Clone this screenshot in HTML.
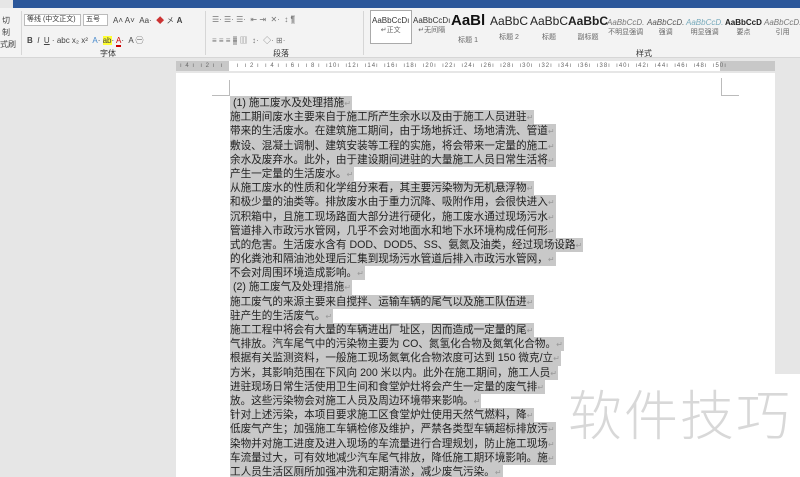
<!DOCTYPE html>
<html style="overflow:hidden;width:800px;height:477px"><head><meta charset="utf-8">
<style>
*{margin:0;padding:0;box-sizing:border-box}
body{width:800px;height:477px;overflow:hidden;background:#e6e6e6;font-family:"Liberation Sans","Noto Sans CJK SC",sans-serif;position:relative}
.abs{position:absolute}
.top{left:13px;top:0;width:787px;height:8px;background:#2b579a}
.rib{left:0;top:8px;width:800px;height:50px;background:#f3f3f3;border-bottom:1px solid #d6d6d6}
.t{position:absolute;font-size:8px;color:#444;white-space:nowrap}
.box{position:absolute;border:1px solid #bbb;background:#fff;height:12px;font-size:7px;color:#333;padding-left:2px;line-height:10px;white-space:nowrap;overflow:hidden}
.sep{position:absolute;width:1px;background:#d6d6d6;top:11px;height:44px}
.sty{position:absolute;top:8px;text-align:center;white-space:nowrap}
.ruler{left:176px;top:61px;width:599px;height:10px;background:#c8c8c8}
.page{left:176px;top:73px;width:599px;height:404px;background:#fff}
.doc{left:230px;top:96px;font-size:10.6px;color:#222;line-height:14.2px;height:381px;overflow:hidden}
.doc div{height:14.2px;white-space:nowrap}
.doc span{background:#c8c8c8;display:inline-block;height:14.2px;padding-right:1px}
.doc i{font-style:normal;color:#999;font-size:8px}
.wm{left:568px;top:382px;font-size:54px;color:#d8d8d8;font-family:"Noto Sans CJK SC",sans-serif;font-weight:300;letter-spacing:2px;line-height:60px}
</style></head><body>
<div class="abs top"></div>
<div class="abs rib">
  <div class="t" style="left:2px;top:7px">切</div>
  <div class="t" style="left:2px;top:19px">制</div>
  <div class="t" style="left:0;top:31px">式刷</div>
  <div class="sep" style="left:21px;top:3px"></div>
  <div class="box" style="left:24px;top:6px;width:57px">等线 (中文正文)</div>
  <div class="box" style="left:83px;top:6px;width:25px">五号</div>
  <div class="t" style="left:113px;top:7px">A˄ A˅ &nbsp;Aa· &nbsp;<span style="color:#c33">◆</span> 㐅 <b>A</b></div>
  <div class="t" style="left:27px;top:27px"><b>B</b> &nbsp;<i>I</i> &nbsp;<u>U</u> · abc x₂ x² &nbsp;<span style="color:#48c">A</span>· <span style="background:#ff3">ab</span>· <span style="color:#c00;border-bottom:2px solid #c00">A</span>· &nbsp;A ㊀</div>
  <div class="t" style="left:100px;top:40px;color:#333">字体</div>
  <div class="sep" style="left:205px;top:3px"></div>
  <div class="t" style="left:212px;top:7px;color:#777">☰· ☰· ☰· &nbsp;⇤ ⇥ &nbsp;✕· &nbsp;↕ <span style="background:#ccc">¶</span></div>
  <div class="t" style="left:212px;top:27px;color:#777">≡ ≡ ≡ <span style="background:#bbb">≡</span> ▥ &nbsp;↕· &nbsp;◇· ⊞·</div>
  <div class="t" style="left:273px;top:40px;color:#333">段落</div>
  <div class="sep" style="left:363px;top:3px"></div>
  <div class="abs" style="left:370px;top:2px;width:42px;height:34px;border:1px solid #aaa;background:#fff"></div>
  <div class="sty" style="left:372px;font-size:8px;color:#333">AaBbCcDı<br><span style="font-size:7px;color:#666">↵正文</span></div>
  <div class="sty" style="left:413px;font-size:8px;color:#333">AaBbCcDı<br><span style="font-size:7px;color:#666">↵无间隔</span></div>
  <div class="sty" style="left:451px;top:4px;font-size:15px;font-weight:bold;color:#111">AaBl<br><span style="font-size:7px;color:#666;font-weight:normal">标题 1</span></div>
  <div class="sty" style="left:490px;top:6px;font-size:12px;color:#222">AaBbC<br><span style="font-size:7px;color:#666">标题 2</span></div>
  <div class="sty" style="left:530px;top:6px;font-size:12px;color:#222">AaBbC<br><span style="font-size:7px;color:#666">标题</span></div>
  <div class="sty" style="left:568px;top:6px;font-size:12px;font-weight:bold;color:#222">AaBbC<br><span style="font-size:7px;color:#666;font-weight:normal">副标题</span></div>
  <div class="sty" style="left:607px;top:10px;font-size:8px;font-style:italic;color:#777">AaBbCcD.<br><span style="font-size:7px;color:#666;font-style:normal">不明显强调</span></div>
  <div class="sty" style="left:647px;top:10px;font-size:8px;font-style:italic;color:#555">AaBbCcD.<br><span style="font-size:7px;color:#666;font-style:normal">强调</span></div>
  <div class="sty" style="left:686px;top:10px;font-size:8px;font-style:italic;color:#7ab">AaBbCcD.<br><span style="font-size:7px;color:#666;font-style:normal">明显强调</span></div>
  <div class="sty" style="left:725px;top:10px;font-size:8px;font-weight:bold;color:#222">AaBbCcD<br><span style="font-size:7px;color:#666;font-weight:normal">要点</span></div>
  <div class="sty" style="left:764px;top:10px;font-size:8px;font-style:italic;color:#777">AaBbCcD.<br><span style="font-size:7px;color:#666;font-style:normal">引用</span></div>
  <div class="t" style="left:636px;top:40px;color:#333">样式</div>
</div>
<div class="abs ruler"></div>
<div class="abs" style="left:229px;top:61px;width:491px;height:10px;background:#fff"></div>
<div class="abs" style="left:180px;top:63px;font-size:6px;color:#666;white-space:nowrap;letter-spacing:1px">ı 4 ı &nbsp;ı 2 ı &nbsp;ı &nbsp;&nbsp;&nbsp;&nbsp;ı &nbsp;ı 2 ı &nbsp;ı 4 ı &nbsp;ı 6 ı &nbsp;ı 8 ı &nbsp;ı10ı &nbsp;ı12ı &nbsp;ı14ı &nbsp;ı16ı &nbsp;ı18ı &nbsp;ı20ı &nbsp;ı22ı &nbsp;ı24ı &nbsp;ı26ı &nbsp;ı28ı &nbsp;ı30ı &nbsp;ı32ı &nbsp;ı34ı &nbsp;ı36ı &nbsp;ı38ı &nbsp;ı40ı &nbsp;ı42ı &nbsp;ı44ı &nbsp;ı46ı &nbsp;ı48ı &nbsp;ı50ı</div>
<div class="abs page"></div>
<div class="abs" style="left:229px;top:80px;width:1px;height:16px;background:#bbb"></div>
<div class="abs" style="left:212px;top:95px;width:17px;height:1px;background:#bbb"></div>
<div class="abs" style="left:721px;top:78px;width:1px;height:17px;background:#bbb"></div>
<div class="abs" style="left:721px;top:95px;width:18px;height:1px;background:#bbb"></div>
<div class="abs" style="left:774px;top:374px;width:26px;height:103px;background:#fff"></div>
<div class="abs doc">
<div><span>&nbsp;(1) 施工废水及处理措施<i>↵</i></span></div>
<div><span>施工期间废水主要来自于施工所产生余水以及由于施工人员进驻<i>↵</i></span></div>
<div><span>带来的生活废水。在建筑施工期间，由于场地拆迁、场地清洗、管道<i>↵</i></span></div>
<div><span>敷设、混凝土调制、建筑安装等工程的实施，将会带来一定量的施工<i>↵</i></span></div>
<div><span>余水及废弃水。此外，由于建设期间进驻的大量施工人员日常生活将<i>↵</i></span></div>
<div><span>产生一定量的生活废水。<i>↵</i></span></div>
<div><span>从施工废水的性质和化学组分来看，其主要污染物为无机悬浮物<i>↵</i></span></div>
<div><span>和极少量的油类等。排放废水由于重力沉降、吸附作用，会很快进入<i>↵</i></span></div>
<div><span>沉积箱中，且施工现场路面大部分进行硬化，施工废水通过现场污水<i>↵</i></span></div>
<div><span>管道排入市政污水管网，几乎不会对地面水和地下水环境构成任何形<i>↵</i></span></div>
<div><span>式的危害。生活废水含有 DOD、DOD5、SS、氨氮及油类，经过现场设路<i>↵</i></span></div>
<div><span>的化粪池和隔油池处理后汇集到现场污水管道后排入市政污水管网，<i>↵</i></span></div>
<div><span>不会对周围环境造成影响。<i>↵</i></span></div>
<div><span>&nbsp;(2) 施工废气及处理措施<i>↵</i></span></div>
<div><span>施工废气的来源主要来自搅拌、运输车辆的尾气以及施工队伍进<i>↵</i></span></div>
<div><span>驻产生的生活废气。<i>↵</i></span></div>
<div><span>施工工程中将会有大量的车辆进出厂址区，因而造成一定量的尾<i>↵</i></span></div>
<div><span>气排放。汽车尾气中的污染物主要为 CO、氮氢化合物及氮氧化合物。<i>↵</i></span></div>
<div><span>根据有关监测资料，一般施工现场氮氧化合物浓度可达到 150 微克/立<i>↵</i></span></div>
<div><span>方米，其影响范围在下风向 200 米以内。此外在施工期间，施工人员<i>↵</i></span></div>
<div><span>进驻现场日常生活使用卫生间和食堂炉灶将会产生一定量的废气排<i>↵</i></span></div>
<div><span>放。这些污染物会对施工人员及周边环境带来影响。<i>↵</i></span></div>
<div><span>针对上述污染，本项目要求施工区食堂炉灶使用天然气燃料，降<i>↵</i></span></div>
<div><span>低废气产生；加强施工车辆检修及维护，严禁各类型车辆超标排放污<i>↵</i></span></div>
<div><span>染物并对施工进度及进入现场的车流量进行合理规划，防止施工现场<i>↵</i></span></div>
<div><span>车流量过大，可有效地减少汽车尾气排放，降低施工期环境影响。施<i>↵</i></span></div>
<div><span>工人员生活区厕所加强冲洗和定期清淤，减少废气污染。<i>↵</i></span></div>
</div>
<div class="abs wm">软件技巧</div>
</body></html>
